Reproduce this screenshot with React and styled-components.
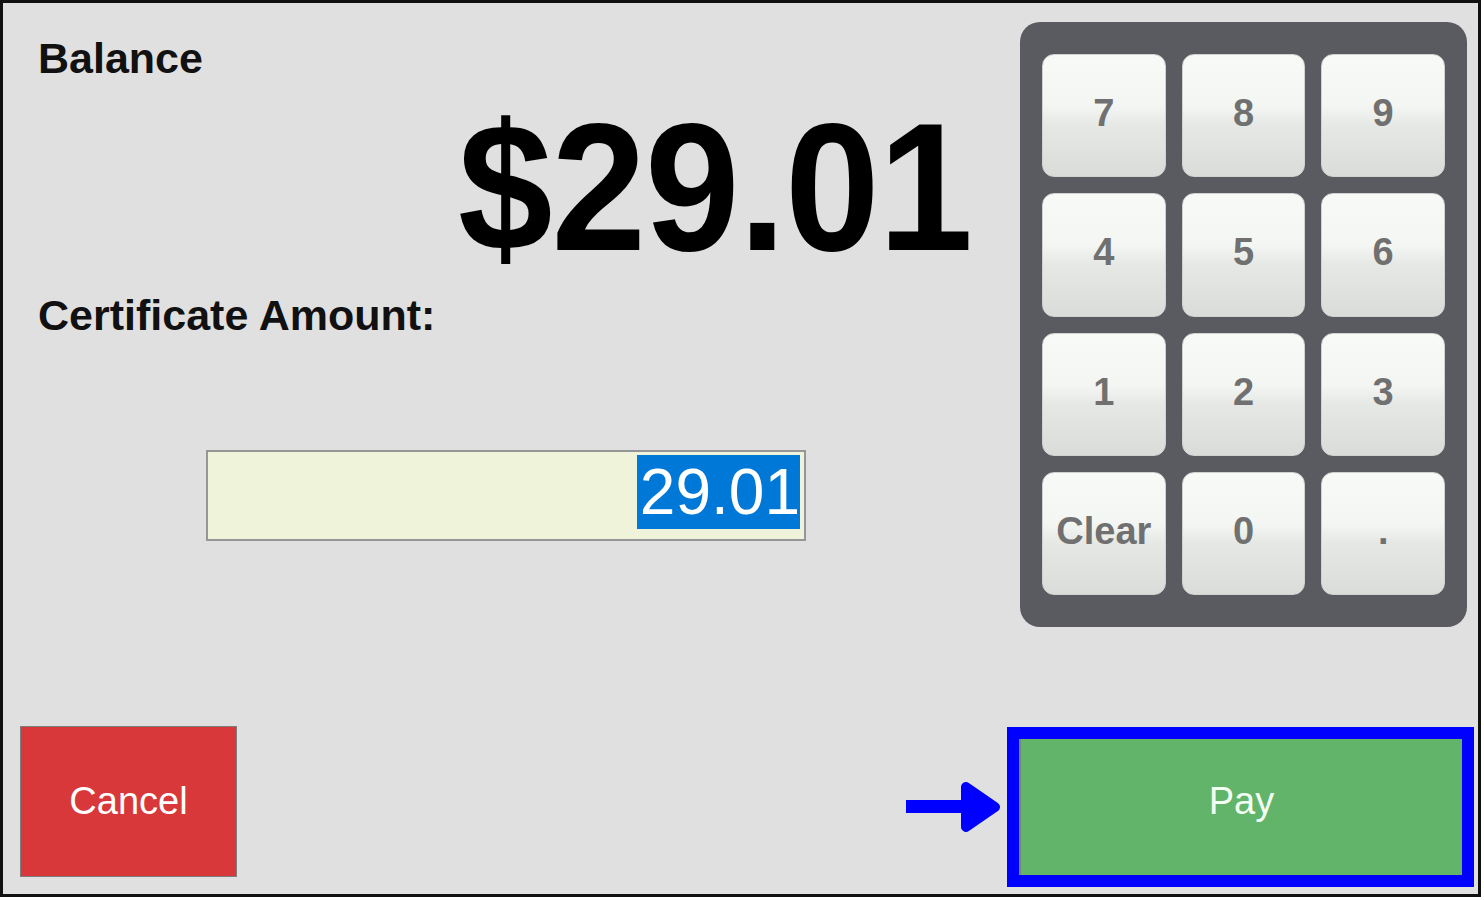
import React from "react";
import styled, { createGlobalStyle } from "styled-components";

const GlobalStyle = createGlobalStyle`
  html, body {
    margin: 0;
    padding: 0;
    background: #ffffff;
  }
  body {
    font-family: "Liberation Sans", Arial, sans-serif;
  }
`;

/* estilos */

const Frame = styled.div`
  box-sizing: border-box;
  width: 1481px;
  height: 897px;
  border: 3px solid #111111;
  background: #e0e0e0;
  display: flex;
  flex-direction: column;
`;

const Top = styled.div`
  display: flex;
  gap: 28px;
  padding: 19px 11px 0 35px;
`;

const LeftColumn = styled.div`
  flex: 1;
  display: flex;
  flex-direction: column;
`;

const Label = styled.div`
  font-size: 43px;
  line-height: 1;
  font-weight: bold;
  color: #111111;
  margin-top: ${(p) => p.$top}px;
`;

const Amount = styled.div`
  font-size: 170px;
  line-height: 1;
  font-weight: bold;
  letter-spacing: -1px;
  color: #000000;
  text-align: right;
  margin-top: 22px;
  padding-right: 20px;
  transform: scaleY(1.07);
`;

const AmountBox = styled.div`
  box-sizing: border-box;
  width: 600px;
  height: 91px;
  margin: 113px 0 0 168px;
  border: 2px solid #969696;
  background: #eff3d9;
  display: flex;
  justify-content: flex-end;
  align-items: flex-start;
  padding: 3px 4px 0 0;
`;

const Selected = styled.span`
  background: #0078d7;
  color: #ffffff;
  font-size: 64px;
  line-height: 74px;
  padding-left: 3px;
`;

const Keypad = styled.div`
  box-sizing: border-box;
  width: 447px;
  height: 605px;
  background: #5a5a61;
  border-radius: 20px;
  padding: 32px 22px;
  display: grid;
  grid-template-columns: repeat(3, 1fr);
  grid-template-rows: repeat(4, 1fr);
  gap: 16px;
`;

const Key = styled.button`
  border: 1px solid #cfd2cf;
  border-radius: 12px;
  background: linear-gradient(
    #f7faf7 0%,
    #f3f6f3 42%,
    #e5e8e5 58%,
    #d9dcd9 100%
  );
  font-family: "Liberation Sans", Arial, sans-serif;
  font-size: 38px;
  font-weight: bold;
  color: #707070;
  padding: 0 0 4px 0;
  display: flex;
  align-items: center;
  justify-content: center;
`;

const Spacer = styled.div`
  flex: 1;
`;

const Bottom = styled.div`
  display: flex;
  align-items: flex-end;
  padding: 0 16px 17px 17px;
`;

const CancelButton = styled.button`
  width: 217px;
  height: 151px;
  border: 1px solid #7d7d7d;
  background: #d8383a;
  color: #ffffff;
  font-family: "Liberation Sans", Arial, sans-serif;
  font-size: 38px;
  padding: 0;
`;

const Arrow = styled.svg`
  margin: 0 19px 44px auto;
`;

const PayButton = styled.button`
  width: 443px;
  height: 136px;
  margin-bottom: 2px;
  border: none;
  border-left: 2px solid #6c8a6e;
  background: #62b46a;
  color: #f4fff4;
  font-family: "Liberation Sans", Arial, sans-serif;
  font-size: 38px;
  padding: 0 0 12px 0;
  outline: 12px solid #0000ff;
`;

const keys = ["7", "8", "9", "4", "5", "6", "1", "2", "3", "Clear", "0", "."];

const App = () => {
  return (
    <>
      <GlobalStyle />
      <Frame>
        <Top>
          <LeftColumn>
            <Label $top={15}>Balance</Label>
            <Amount>$29.01</Amount>
            <Label $top={22}>Certificate Amount:</Label>
            <AmountBox>
              <Selected>29.01</Selected>
            </AmountBox>
          </LeftColumn>
          <Keypad>
            {keys.map((k) => (
              <Key key={k}>{k}</Key>
            ))}
          </Keypad>
        </Top>
        <Spacer />
        <Bottom>
          <CancelButton>Cancel</CancelButton>
          <Arrow width="94" height="52" viewBox="0 0 94 52">
            <rect x="0" y="19" width="62" height="13" fill="#0000ff" />
            <polygon
              points="60,6 89,26 60,46"
              fill="#0000ff"
              stroke="#0000ff"
              strokeWidth="10"
              strokeLinejoin="round"
            />
          </Arrow>
          <PayButton>Pay</PayButton>
        </Bottom>
      </Frame>
    </>
  );
};

export default App;
